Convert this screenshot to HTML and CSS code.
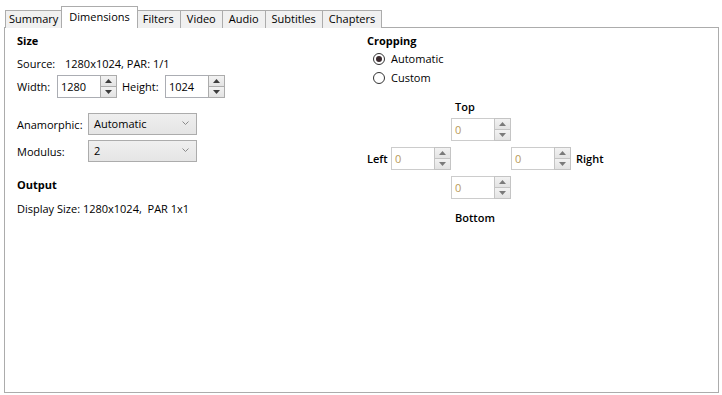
FILE: index.html
```html
<html>
  <head>
    <meta charset="utf-8">
    <link rel="stylesheet" href="styles.css">
  </head>
  <body>
    <div class="window">
      <div class="tabs">
        <div class="tab first">Summary</div>
        <div class="tab active">Dimensions</div>
        <div class="tab">Filters</div>
        <div class="tab">Video</div>
        <div class="tab">Audio</div>
        <div class="tab">Subtitles</div>
        <div class="tab">Chapters</div>
      </div>
      <div class="panel">
        <div class="col left">
          <p class="heading">Size</p>
          <div class="row source">
            <span class="label">Source:</span>
            <span class="value">1280x1024, PAR: 1/1</span>
          </div>
          <div class="row sizes">
            <span class="label">Width:</span>
            <div class="spin">
              <div class="field">1280</div>
              <div class="buttons">
                <div class="btn up"><svg width="7" height="4" viewBox="0 0 7 4"><polygon points="0,4 3.5,0 7,4" /></svg></div>
                <div class="btn down"><svg width="7" height="4" viewBox="0 0 7 4"><polygon points="0,0 3.5,4 7,0" /></svg></div>
              </div>
            </div>
            <span class="label gap">Height:</span>
            <div class="spin">
              <div class="field">1024</div>
              <div class="buttons">
                <div class="btn up"><svg width="7" height="4" viewBox="0 0 7 4"><polygon points="0,4 3.5,0 7,4" /></svg></div>
                <div class="btn down"><svg width="7" height="4" viewBox="0 0 7 4"><polygon points="0,0 3.5,4 7,0" /></svg></div>
              </div>
            </div>
          </div>
          <div class="row combo-row first-combo">
            <span class="label wide">Anamorphic:</span>
            <div class="combo">
              <span>Automatic</span>
              <svg width="7" height="4" viewBox="0 0 7 4"><polyline points="0.5,0.5 3.5,3.5 6.5,0.5" /></svg>
            </div>
          </div>
          <div class="row combo-row">
            <span class="label wide">Modulus:</span>
            <div class="combo">
              <span>2</span>
              <svg width="7" height="4" viewBox="0 0 7 4"><polyline points="0.5,0.5 3.5,3.5 6.5,0.5" /></svg>
            </div>
          </div>
          <p class="heading output">Output</p>
          <p class="display">Display Size: 1280x1024,&nbsp; PAR 1x1</p>
        </div>

        <div class="col right">
          <p class="heading">Cropping</p>
          <div class="radio checked first-radio"><span class="dot"></span>Automatic</div>
          <div class="radio"><span class="dot"></span>Custom</div>

          <div class="crop">
            <div class="cell top-label">Top</div>
            <div class="cell top">
              <div class="spin disabled">
                <div class="field">0</div>
                <div class="buttons">
                  <div class="btn up"><svg width="7" height="4" viewBox="0 0 7 4"><polygon points="0,4 3.5,0 7,4" /></svg></div>
                  <div class="btn down"><svg width="7" height="4" viewBox="0 0 7 4"><polygon points="0,0 3.5,4 7,0" /></svg></div>
                </div>
              </div>
            </div>
            <div class="cell left-cell">
              <span class="side">Left</span>
              <div class="spin disabled">
                <div class="field">0</div>
                <div class="buttons">
                  <div class="btn up"><svg width="7" height="4" viewBox="0 0 7 4"><polygon points="0,4 3.5,0 7,4" /></svg></div>
                  <div class="btn down"><svg width="7" height="4" viewBox="0 0 7 4"><polygon points="0,0 3.5,4 7,0" /></svg></div>
                </div>
              </div>
            </div>
            <div class="cell right-cell">
              <div class="spin disabled">
                <div class="field">0</div>
                <div class="buttons">
                  <div class="btn up"><svg width="7" height="4" viewBox="0 0 7 4"><polygon points="0,4 3.5,0 7,4" /></svg></div>
                  <div class="btn down"><svg width="7" height="4" viewBox="0 0 7 4"><polygon points="0,0 3.5,4 7,0" /></svg></div>
                </div>
              </div>
              <span class="side">Right</span>
            </div>
            <div class="cell bottom">
              <div class="spin disabled">
                <div class="field">0</div>
                <div class="buttons">
                  <div class="btn up"><svg width="7" height="4" viewBox="0 0 7 4"><polygon points="0,4 3.5,0 7,4" /></svg></div>
                  <div class="btn down"><svg width="7" height="4" viewBox="0 0 7 4"><polygon points="0,0 3.5,4 7,0" /></svg></div>
                </div>
              </div>
            </div>
            <div class="cell bottom-label">Bottom</div>
          </div>
        </div>
      </div>
    </div>
  </body>
</html>
```

FILE: styles.css
```css
* {
  padding: 0;
  margin: 0;
  box-sizing: border-box;
}
body {
  background: #fff;
  font-family: "Open Sans", "Noto Sans", sans-serif;
  font-size: 11px;
  color: #000;
}
.window {
  padding: 6px 0 0 4px;
  width: 719px;
}
.tabs {
  display: flex;
  align-items: flex-end;
  height: 21px;
  padding-left: 1px;
}
.tab {
  height: 18px;
  line-height: 15px;
  padding: 0 6px;
  background: #f0f0f0;
  border: 1px solid #acacac;
  border-bottom: none;
  border-left: none;
  margin-bottom: -1px;
  position: relative;
}
.tab.first {
  border-left: 1px solid #acacac;
  padding: 0 3px;
}
.tab.active {
  height: 22px;
  line-height: 19px;
  background: #fff;
  border-left: 1px solid #acacac;
  margin-left: -1px;
  padding: 0 7px;
  margin-right: -1px;
  z-index: 1;
}
.tab.active + .tab {
  border-left: 1px solid #acacac;
  padding-left: 5px;
}
.panel {
  display: flex;
  height: 366px;
  border: 1px solid #acacac;
  background: #fff;
}
.col.left {
  width: 350px;
  padding: 5px 0 0 12px;
}
.col.right {
  padding: 5px 0 0 12px;
}
.heading {
  font-weight: bold;
  line-height: 15px;
}
.row {
  display: flex;
  align-items: center;
}
.source {
  margin-top: 7px;
  height: 16px;
}
.source .label {
  width: 48px;
}
.sizes {
  margin-top: 4px;
  height: 23px;
}
.label {
  display: inline-block;
}
.sizes .label {
  width: 40px;
}
.sizes .label.gap {
  width: 43px;
  margin-left: 5px;
}
.spin {
  display: flex;
  height: 23px;
}
.field {
  width: 43px;
  height: 23px;
  border: 1px solid #abadb3;
  border-right: none;
  padding: 3px 0 0 3px;
  line-height: 16px;
  background: #fff;
}
.buttons {
  display: flex;
  flex-direction: column;
  width: 17px;
}
.btn {
  flex: 1;
  display: flex;
  align-items: center;
  justify-content: center;
  background: linear-gradient(#f2f2f2, #e3e3e3);
  border: 1px solid #acacac;
}
.btn.down {
  border-top: none;
}
.btn svg polygon {
  fill: #3c3c3c;
}
.combo-row {
  height: 22px;
}
.first-combo {
  margin-top: 15px;
  margin-bottom: 5px;
}
.label.wide {
  width: 71px;
}
.combo {
  width: 109px;
  height: 22px;
  display: flex;
  align-items: center;
  justify-content: space-between;
  padding: 0 7px 2px 5px;
  border: 1px solid #acacac;
  background: linear-gradient(#efefef, #e5e5e5);
}
.combo svg polyline {
  fill: none;
  stroke: #8a8a8a;
  stroke-width: 1;
}
.output {
  margin-top: 15px;
}
.display {
  margin-top: 9px;
  line-height: 15px;
}
.radio {
  display: flex;
  align-items: center;
  height: 19px;
  margin-left: 6px;
}
.first-radio {
  margin-top: 1px;
}
.dot {
  width: 12px;
  height: 12px;
  border: 1px solid #333;
  border-radius: 50%;
  margin-right: 6px;
  display: flex;
  align-items: center;
  justify-content: center;
}
.radio.checked .dot::after {
  content: "";
  width: 6px;
  height: 6px;
  border-radius: 50%;
  background: #3a2a2e;
}
.crop {
  display: grid;
  grid-template-columns: 84px 60px 100px;
  grid-template-rows: 23px 23px 29px 29px 37px;
  margin-top: 8px;
}
.cell {
  display: flex;
  align-items: center;
}
.top-label {
  grid-column: 2;
  grid-row: 1;
  padding-left: 4px;
  font-weight: 600;
}
.top {
  grid-column: 2;
  grid-row: 2;
  align-items: flex-end;
}
.left-cell {
  grid-column: 1;
  grid-row: 3;
  align-items: flex-end;
}
.right-cell {
  grid-column: 3;
  grid-row: 3;
  align-items: flex-end;
}
.bottom {
  grid-column: 2;
  grid-row: 4;
  align-items: flex-end;
}
.bottom-label {
  grid-column: 2;
  grid-row: 5;
  padding-left: 4px;
  font-weight: 600;
}
.side {
  font-weight: 600;
  line-height: 23px;
}
.left-cell .side {
  width: 24px;
}
.right-cell .side {
  margin-left: 5px;
}
.spin.disabled .field {
  border-color: #cccccc;
  color: #b89a5a;
}
.spin.disabled .btn {
  border-color: #c4c4c4;
}
.spin.disabled .btn svg polygon {
  fill: #7a7a7a;
}
```
